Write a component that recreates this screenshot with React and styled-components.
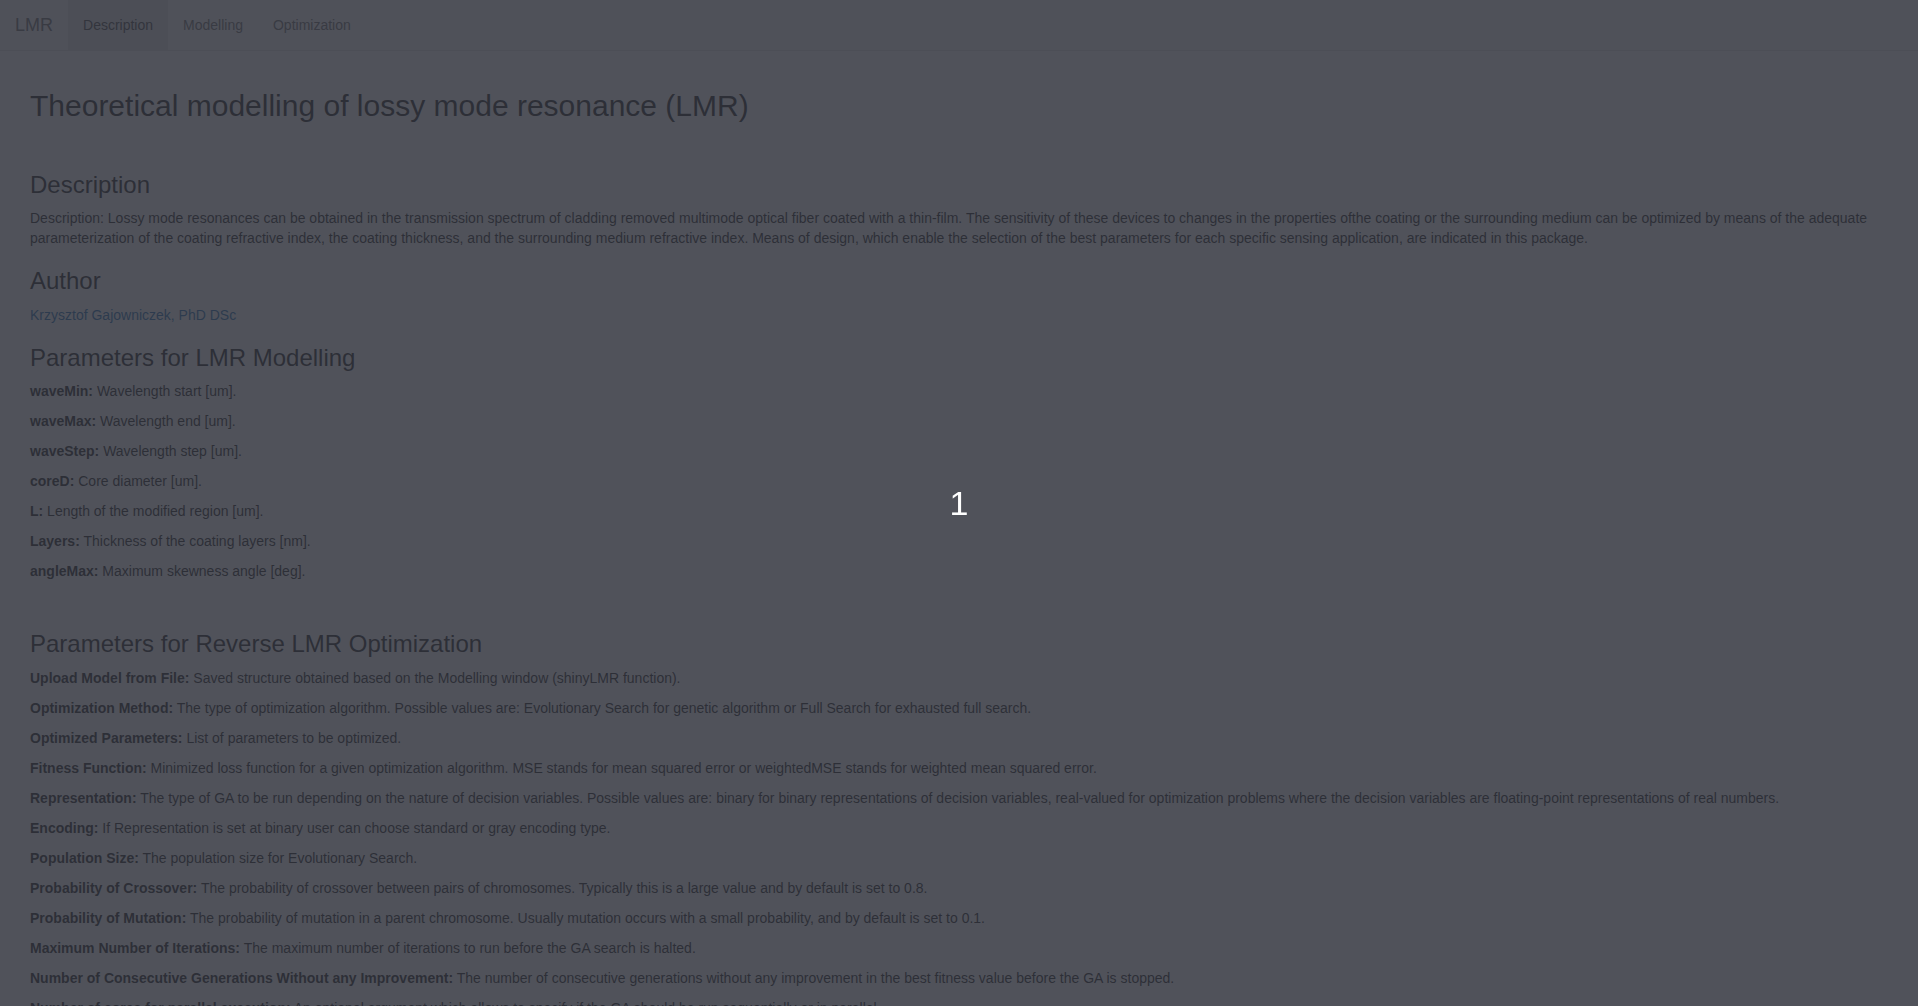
import React from "react";
import styled, { createGlobalStyle } from "styled-components";

const GlobalStyle = createGlobalStyle`
  html, body {
    margin: 0;
    padding: 0;
  }
  body {
    font-family: "Liberation Sans", Arial, Helvetica, sans-serif;
    font-size: 14px;
    line-height: 1.42857143;
    color: #333;
    background: #fff;
  }
`;

const modelParams = [
  ["waveMin:", "Wavelength start [um]."],
  ["waveMax:", "Wavelength end [um]."],
  ["waveStep:", "Wavelength step [um]."],
  ["coreD:", "Core diameter [um]."],
  ["L:", "Length of the modified region [um]."],
  ["Layers:", "Thickness of the coating layers [nm]."],
  ["angleMax:", "Maximum skewness angle [deg]."],
];

const optimParams = [
  ["Upload Model from File:", "Saved structure obtained based on the Modelling window (shinyLMR function)."],
  ["Optimization Method:", "The type of optimization algorithm. Possible values are: Evolutionary Search for genetic algorithm or Full Search for exhausted full search."],
  ["Optimized Parameters:", "List of parameters to be optimized."],
  ["Fitness Function:", "Minimized loss function for a given optimization algorithm. MSE stands for mean squared error or weightedMSE stands for weighted mean squared error."],
  ["Representation:", "The type of GA to be run depending on the nature of decision variables. Possible values are: binary for binary representations of decision variables, real-valued for optimization problems where the decision variables are floating-point representations of real numbers."],
  ["Encoding:", "If Representation is set at binary user can choose standard or gray encoding type."],
  ["Population Size:", "The population size for Evolutionary Search."],
  ["Probability of Crossover:", "The probability of crossover between pairs of chromosomes. Typically this is a large value and by default is set to 0.8."],
  ["Probability of Mutation:", "The probability of mutation in a parent chromosome. Usually mutation occurs with a small probability, and by default is set to 0.1."],
  ["Maximum Number of Iterations:", "The maximum number of iterations to run before the GA search is halted."],
  ["Number of Consecutive Generations Without any Improvement:", "The number of consecutive generations without any improvement in the best fitness value before the GA is stopped."],
  ["Number of cores for parallel execution:", "An optional argument which allows to specify if the GA should be run sequentially or in parallel."],
];

const tabs = ["Description", "Modelling", "Optimization"];

const App = () => {
  return (
    <>
      <GlobalStyle />
      <Navbar>
        <Brand>LMR</Brand>
        <NavList>
          {tabs.map((tab, i) => (
            <NavItem key={tab} active={i === 0}>
              {tab}
            </NavItem>
          ))}
        </NavList>
      </Navbar>

      <Content>
        <Title>Theoretical modelling of lossy mode resonance (LMR)</Title>
        <Spacer />

        <SectionTitle>Description</SectionTitle>
        <Text>
          Description: Lossy mode resonances can be obtained in the transmission
          spectrum of cladding removed multimode optical fiber coated with a
          thin-film. The sensitivity of these devices to changes in the
          properties ofthe coating or the surrounding medium can be optimized by
          means of the adequate parameterization of the coating refractive
          index, the coating thickness, and the surrounding medium refractive
          index. Means of design, which enable the selection of the best
          parameters for each specific sensing application, are indicated in
          this package.
        </Text>

        <SectionTitle>Author</SectionTitle>
        <Text>
          <AuthorLink href="#">Krzysztof Gajowniczek, PhD DSc</AuthorLink>
        </Text>

        <SectionTitle>Parameters for LMR Modelling</SectionTitle>
        {modelParams.map(([label, desc]) => (
          <Text key={label}>
            <strong>{label}</strong> {desc}
          </Text>
        ))}
        <Spacer />

        <SectionTitle>Parameters for Reverse LMR Optimization</SectionTitle>
        {optimParams.map(([label, desc]) => (
          <Text key={label}>
            <strong>{label}</strong> {desc}
          </Text>
        ))}
      </Content>

      <Overlay>
        <Counter>1</Counter>
      </Overlay>
    </>
  );
};

const Navbar = styled.nav`
  display: flex;
  align-items: stretch;
  height: 50px;
  background: #f8f8f8;
  border-bottom: 1px solid #e7e7e7;
  margin-bottom: 18px;
`;

const Brand = styled.div`
  padding: 15px;
  font-size: 18px;
  line-height: 20px;
  color: #777;
`;

const NavList = styled.ul`
  display: flex;
  margin: 0;
  padding: 0;
  list-style: none;
`;

const NavItem = styled.li`
  padding: 15px;
  line-height: 20px;
  color: ${(p) => (p.active ? "#555" : "#777")};
  background: ${(p) => (p.active ? "#e7e7e7" : "transparent")};
`;

const Content = styled.main`
  padding: 0 30px 32px;
  display: flow-root;
`;

const Title = styled.h2`
  margin: 20px 0 10px;
  font-size: 30px;
  font-weight: 500;
  line-height: 1.1;
`;

const Spacer = styled.div`
  height: 20px;
`;

const SectionTitle = styled.h3`
  margin: 20px 0 10px;
  font-size: 24px;
  font-weight: 500;
  line-height: 1.1;
`;

const Text = styled.p`
  margin: 0 0 10px;
  strong {
    font-weight: 700;
  }
`;

const AuthorLink = styled.a`
  color: #337ab7;
  text-decoration: none;
`;

const Overlay = styled.div`
  position: fixed;
  inset: 0;
  background: rgba(44, 47, 57, 0.83);
  display: flex;
  align-items: center;
  justify-content: center;
  z-index: 100;
`;

const Counter = styled.div`
  color: #fff;
  font-size: 34px;
  line-height: 1;
`;

export default App;
